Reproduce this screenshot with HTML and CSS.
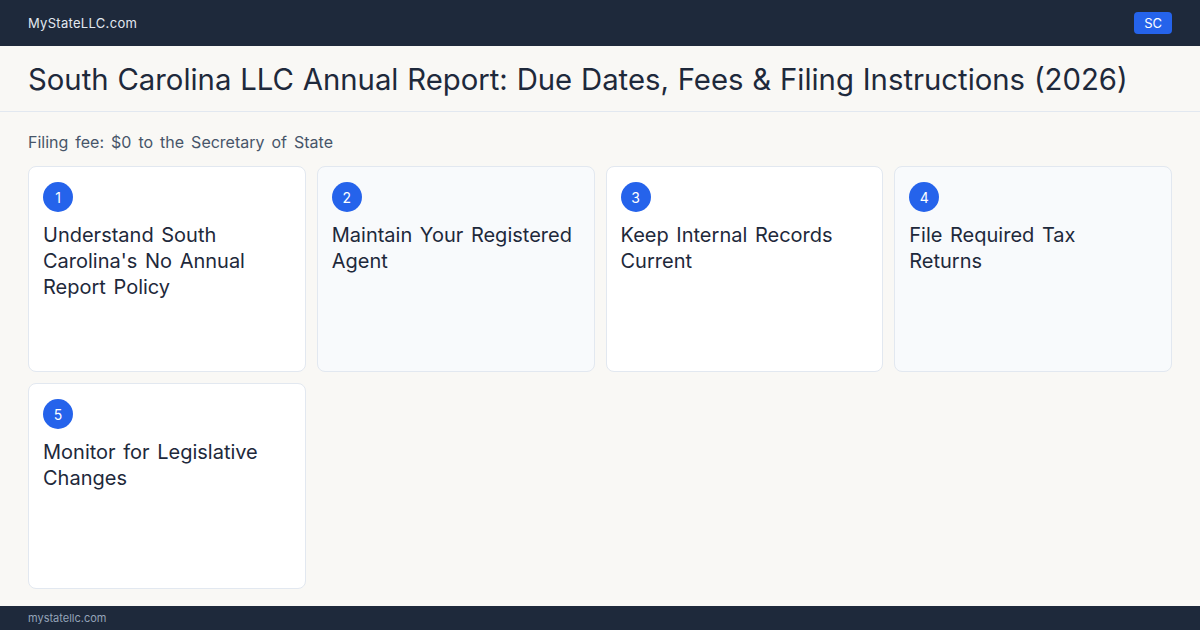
FILE: index.html
```html
<!DOCTYPE html>
<html lang="en">
<head>
    <meta charset="UTF-8">
    <meta name="viewport" content="width=device-width, initial-scale=1.0">
    <title>South Carolina LLC Annual Report</title>
    <link rel="stylesheet" href="styles.css">
</head>
<body>
    <header class="topbar">
        <span class="brand">MyStateLLC.com</span>
        <span class="state-badge">SC</span>
    </header>

    <div class="title-bar">
        <h1>South Carolina LLC Annual Report: Due Dates, Fees &amp; Filing Instructions (2026)</h1>
    </div>

    <main class="content">
        <p class="fee">Filing fee: $0 to the Secretary of State</p>

        <!-- Steps -->
        <div class="steps">
            <div class="step">
                <span class="step-num">1</span>
                <h2>Understand South Carolina's No Annual Report Policy</h2>
            </div>
            <div class="step alt">
                <span class="step-num">2</span>
                <h2>Maintain Your Registered Agent</h2>
            </div>
            <div class="step">
                <span class="step-num">3</span>
                <h2>Keep Internal Records Current</h2>
            </div>
            <div class="step alt">
                <span class="step-num">4</span>
                <h2>File Required Tax Returns</h2>
            </div>
            <div class="step">
                <span class="step-num">5</span>
                <h2>Monitor for Legislative Changes</h2>
            </div>
        </div>
    </main>

    <footer class="footer">mystatellc.com</footer>
</body>
</html>
```

FILE: styles.css
```css
* {
    box-sizing: border-box;
}
body {
    margin: 0;
    height: 630px;
    display: flex;
    flex-direction: column;
    font-family: Inter, "Noto Sans", Arial, sans-serif;
    background-color: #f9f8f5;
    color: #1e293b;
}
.topbar {
    height: 46px;
    flex-shrink: 0;
    display: flex;
    align-items: center;
    justify-content: space-between;
    padding: 0 28px;
    background-color: #1e293b;
}
.brand {
    color: #e2e8f0;
    font-size: 13px;
    letter-spacing: 0.3px;
}
.state-badge {
    height: 22px;
    padding: 0 10px;
    display: flex;
    align-items: center;
    background-color: #2563eb;
    color: #fff;
    font-size: 13px;
    border-radius: 4px;
}
.title-bar {
    padding: 15px 28px 12px;
    border-bottom: 1px solid #e2e8f0;
}
.title-bar h1 {
    margin: 0;
    font-size: 29.3px;
    line-height: 38px;
    font-weight: 400;
    word-spacing: 0.6px;
    color: #1e293b;
}
.content {
    flex: 1;
    padding: 20px 28px 0;
}
.fee {
    margin: 0 0 14px;
    font-size: 16px;
    line-height: 20px;
    word-spacing: 2.5px;
    color: #475569;
}
.steps {
    display: grid;
    grid-template-columns: repeat(4, 1fr);
    grid-auto-rows: 206px;
    gap: 11px;
}
.step {
    padding: 15px 20px 15px 14px;
    background-color: #fff;
    border: 1px solid #e2e8f0;
    border-radius: 8px;
}
.step.alt {
    background-color: #f8fafc;
}
.step-num {
    width: 30px;
    height: 30px;
    display: flex;
    align-items: center;
    justify-content: center;
    border-radius: 50%;
    background-color: #2563eb;
    color: #fff;
    font-size: 14px;
}
.step h2 {
    margin: 10px 0 0;
    font-size: 20px;
    line-height: 26px;
    font-weight: 400;
    word-spacing: 2px;
    color: #1e293b;
}
.footer {
    height: 24px;
    flex-shrink: 0;
    display: flex;
    align-items: center;
    padding: 0 28px;
    background-color: #1e293b;
    color: #94a3b8;
    font-size: 11px;
}
```
